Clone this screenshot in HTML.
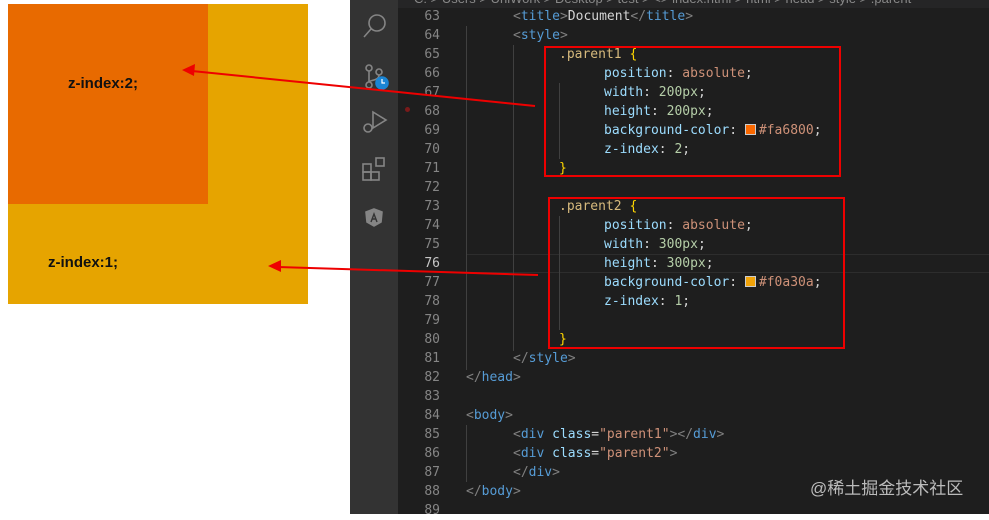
<!DOCTYPE html><html><head><meta charset="utf-8"><style>
body{margin:0;width:989px;height:514px;overflow:hidden;background:#fff;position:relative;font-family:"Liberation Sans",sans-serif}
.a{position:absolute}
.ed{left:398px;top:0;width:591px;height:514px;background:#1e1e1e}
.ln,.c{font-family:"DejaVu Sans Mono","Liberation Mono",monospace;font-size:13px;line-height:19px}
.ln{position:absolute;left:398px;width:42px;text-align:right;color:#858585}
.c{position:absolute;white-space:pre;color:#d4d4d4}
.g{color:#808080}.t{color:#569cd6}.s{color:#d7ba7d}.p{color:#9cdcfe}.v{color:#ce9178}.n{color:#b5cea8}.b{color:#ffd700}
.sw{display:inline-block;width:9px;height:9px;border:1px solid #ccc;margin-right:3px;vertical-align:-1px}
.gd{position:absolute;width:1px;background:#404040}
</style></head><body>
<div class="a" style="left:8px;top:4px;width:300px;height:300px;background:#e6a400"></div>
<div class="a" style="left:8px;top:4px;width:200px;height:200px;background:#e86a00"></div>
<div class="a" style="left:68px;top:75px;font-weight:bold;font-size:15px;color:#111">z-index:2;</div>
<div class="a" style="left:48px;top:254px;font-weight:bold;font-size:15px;color:#111">z-index:1;</div>
<div class="a" style="left:350px;top:0;width:48px;height:514px;background:#333"></div>
<div class="a ed"></div>
<div class="a" style="left:398px;top:0;width:591px;height:8px;background:#252526;overflow:hidden"><div style="position:absolute;top:-8px;left:16px;white-space:pre;color:#888;font-size:13px;line-height:14px">C: &gt; Users &gt; UniWork &gt; Desktop &gt; test &gt; &lt;&gt; index.html &gt; html &gt; head &gt; style &gt; .parent</div></div>
<svg class="a" style="left:350px;top:0" width="48" height="240" fill="none" stroke="#858585" stroke-width="1.6">
<circle cx="27" cy="23" r="8"/><line x1="21" y1="29" x2="14" y2="37"/>
<circle cx="19" cy="68" r="3"/><circle cx="29" cy="72" r="3"/><circle cx="19" cy="85" r="3"/><path d="M19 71v11M29 75c0 6-10 5-10 7"/>
<circle cx="32" cy="83" r="6" fill="#1a85d4" stroke="#1a85d4"/><path d="M32 79v4h3" stroke="#fff" stroke-width="1.2"/>
<path d="M23 112l13 8-13 8z"/><circle cx="18" cy="128" r="4"/>
<rect x="13" y="164" width="8" height="8"/><rect x="13" y="172" width="8" height="8"/><rect x="21" y="172" width="8" height="8"/><rect x="26" y="158" width="8" height="8"/>
<path d="M24 209l8 3-1 10-7 4-7-4-1-10z" fill="#858585"/>
<path d="M21 222l3-8 3 8M22 219h4" stroke="#333" stroke-width="1.4"/>
</svg>
<div class="a" style="left:405px;top:107px;width:5px;height:5px;border-radius:50%;background:#7a1a1a"></div>
<div class="a" style="left:466px;top:254px;width:523px;height:17px;border-top:1px solid #2d2d2d;border-bottom:1px solid #2d2d2d"></div>
<div class="gd" style="left:466px;top:26px;height:344px"></div>
<div class="gd" style="left:513px;top:45px;height:306px"></div>
<div class="gd" style="left:559px;top:83px;height:76px"></div>
<div class="gd" style="left:559px;top:216px;height:114px"></div>
<div class="gd" style="left:466px;top:425px;height:57px"></div>
<div class="ln" style="top:7px">63<br>64<br>65<br>66<br>67<br>68<br>69<br>70<br>71<br>72<br>73<br>74<br>75<br><span style="color:#c6c6c6">76</span><br>77<br>78<br>79<br>80<br>81<br>82<br>83<br>84<br>85<br>86<br>87<br>88<br>89</div>
<div class="c" style="left:513px;top:7px"><span class="g">&lt;</span><span class="t">title</span><span class="g">&gt;</span>Document<span class="g">&lt;/</span><span class="t">title</span><span class="g">&gt;</span></div>
<div class="c" style="left:513px;top:26px"><span class="g">&lt;</span><span class="t">style</span><span class="g">&gt;</span></div>
<div class="c" style="left:559px;top:45px"><span class="s">.parent1</span> <span class="b">{</span></div>
<div class="c" style="left:604px;top:64px"><span class="p">position</span>: <span class="v">absolute</span>;
<span class="p">width</span>: <span class="n">200px</span>;
<span class="p">height</span>: <span class="n">200px</span>;
<span class="p">background-color</span>: <span class="sw" style="background:#fa6800"></span><span class="v">#fa6800</span>;
<span class="p">z-index</span>: <span class="n">2</span>;</div>
<div class="c" style="left:559px;top:159px"><span class="b">}</span></div>
<div class="c" style="left:559px;top:197px"><span class="s">.parent2</span> <span class="b">{</span></div>
<div class="c" style="left:604px;top:216px"><span class="p">position</span>: <span class="v">absolute</span>;
<span class="p">width</span>: <span class="n">300px</span>;
<span class="p">height</span>: <span class="n">300px</span>;
<span class="p">background-color</span>: <span class="sw" style="background:#f0a30a"></span><span class="v">#f0a30a</span>;
<span class="p">z-index</span>: <span class="n">1</span>;</div>
<div class="c" style="left:559px;top:330px"><span class="b">}</span></div>
<div class="c" style="left:513px;top:349px"><span class="g">&lt;/</span><span class="t">style</span><span class="g">&gt;</span></div>
<div class="c" style="left:466px;top:368px"><span class="g">&lt;/</span><span class="t">head</span><span class="g">&gt;</span></div>
<div class="c" style="left:466px;top:406px"><span class="g">&lt;</span><span class="t">body</span><span class="g">&gt;</span></div>
<div class="c" style="left:513px;top:425px"><span class="g">&lt;</span><span class="t">div</span> <span class="p">class</span>=<span class="v">"parent1"</span><span class="g">&gt;&lt;/</span><span class="t">div</span><span class="g">&gt;</span>
<span class="g">&lt;</span><span class="t">div</span> <span class="p">class</span>=<span class="v">"parent2"</span><span class="g">&gt;</span>
<span class="g">&lt;/</span><span class="t">div</span><span class="g">&gt;</span></div>
<div class="c" style="left:466px;top:482px"><span class="g">&lt;/</span><span class="t">body</span><span class="g">&gt;</span></div>
<div class="a" style="left:810px;top:474px;color:#bbb;font-size:17px;font-family:'Liberation Sans','Noto Sans CJK SC',sans-serif">@稀土掘金技术社区</div>
<div class="a" style="left:544px;top:46px;width:293px;height:127px;border:2px solid #e00"></div>
<div class="a" style="left:548px;top:197px;width:293px;height:148px;border:2px solid #e00"></div>
<svg class="a" style="left:0;top:0" width="989" height="514">
<line x1="535" y1="106" x2="192" y2="71" stroke="#e00" stroke-width="2"/>
<path d="M182 70l13-6-1 12z" fill="#e00"/>
<line x1="538" y1="275" x2="278" y2="267" stroke="#e00" stroke-width="2"/>
<path d="M268 266l13-6v12z" fill="#e00"/>
</svg>
</body></html>
